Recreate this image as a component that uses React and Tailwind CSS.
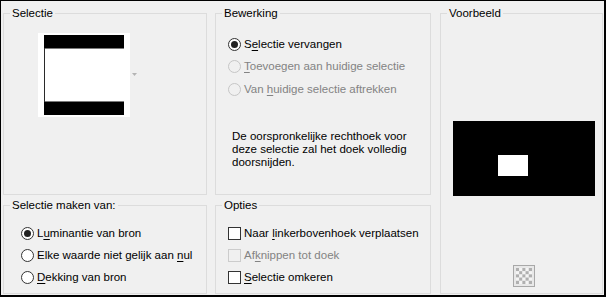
import React from "react";

const GroupBox = ({ title, className = "", children }) => (
  <div className={`relative border border-[#dcdcdc] ${className}`}>
    <span className="absolute -top-[8px] left-[6px] bg-[#f0f0f0] px-[2px] leading-[14px]">
      {title}
    </span>
    {children}
  </div>
);

const Radio = ({ checked, disabled, children }) => (
  <div className={`flex items-center gap-[3px] ${disabled ? "text-[#838383]" : "text-black"}`}>
    <span
      className={`flex h-[13px] w-[13px] items-center justify-center rounded-full border ${
        disabled ? "border-[#c6c6c6] bg-[#f0f0f0]" : "border-[#333333] bg-white"
      }`}
    >
      {checked && <span className="h-[7px] w-[7px] rounded-full bg-[#222222]" />}
    </span>
    <span>{children}</span>
  </div>
);

const Check = ({ disabled, children }) => (
  <div className={`flex items-center gap-[3px] ${disabled ? "text-[#838383]" : "text-black"}`}>
    <span
      className={`h-[13px] w-[13px] border ${
        disabled ? "border-[#cccccc] bg-[#f0f0f0]" : "border-[#333333] bg-white"
      }`}
    />
    <span>{children}</span>
  </div>
);

const U = ({ children }) => <span className="underline underline-offset-[2px]">{children}</span>;

export default function App() {
  return (
    <div
      className="flex h-[297px] w-[606px] border-t border-l border-r-2 border-b-2 border-black bg-[#f0f0f0] pt-[12px] pl-[2px] pr-[1px] pb-[1px] text-[11.5px] leading-[13px] text-black"
      style={{ fontFamily: '"Liberation Sans", Arial, sans-serif' }}
    >
      <div className="grid grid-cols-[204px_216px] grid-rows-[182px_89px] gap-x-[8px] gap-y-[10px]">
        {/* Selectie */}
        <GroupBox title="Selectie">
          <div className="flex items-center pl-[34px] pt-[19px]">
            <div className="flex h-[84px] w-[92px] items-start justify-center bg-white pt-[2px]">
              <svg width="80" height="80" viewBox="0 0 80 80">
                <rect x="0" y="0" width="80" height="80" fill="#ffffff" />
                <rect x="0" y="0" width="80" height="13" fill="#000000" />
                <rect x="0" y="13" width="80" height="1" fill="#7a7a7a" />
                <rect x="0" y="66" width="80" height="1" fill="#7a7a7a" />
                <rect x="0" y="67" width="80" height="13" fill="#000000" />
                <rect x="0" y="13" width="1" height="54" fill="#2a2a2a" />
              </svg>
            </div>
            <svg className="ml-[2px]" width="6" height="4" viewBox="0 0 6 4">
              <path d="M0 0h5l-2.5 3z" fill="#b4b4b4" />
            </svg>
          </div>
        </GroupBox>

        {/* Bewerking */}
        <GroupBox title="Bewerking">
          <div className="flex flex-col pt-[19px] pl-[12px]">
            <div className="flex h-[22px] items-center">
              <Radio checked>
                S<U>e</U>lectie vervangen
              </Radio>
            </div>
            <div className="flex h-[23px] items-center">
              <Radio disabled>
                <U>T</U>oevoegen aan huidige selectie
              </Radio>
            </div>
            <div className="flex h-[22px] items-center">
              <Radio disabled>
                Van <U>h</U>uidige selectie aftrekken
              </Radio>
            </div>
          </div>
          <p className="mt-[30px] pl-[16px] w-[210px]">
            De oorspronkelijke rechthoek voor
            <br />
            deze selectie zal het doek volledig
            <br />
            doorsnijden.
          </p>
        </GroupBox>

        {/* Selectie maken van */}
        <GroupBox title="Selectie maken van:">
          <div className="flex flex-col pt-[16px] pl-[17px]">
            <div className="flex h-[22px] items-center">
              <Radio checked>
                L<U>u</U>minantie van bron
              </Radio>
            </div>
            <div className="flex h-[22px] items-center">
              <Radio>
                Elke waarde niet gelijk aan <U>n</U>ul
              </Radio>
            </div>
            <div className="flex h-[22px] items-center">
              <Radio>
                <U>D</U>ekking van bron
              </Radio>
            </div>
          </div>
        </GroupBox>

        {/* Opties */}
        <GroupBox title="Opties">
          <div className="flex flex-col pt-[16px] pl-[12px]">
            <div className="flex h-[22px] items-center">
              <Check>
                Naar <U>l</U>inkerbovenhoek verplaatsen
              </Check>
            </div>
            <div className="flex h-[22px] items-center">
              <Check disabled>
                Af<U>k</U>nippen tot doek
              </Check>
            </div>
            <div className="flex h-[22px] items-center">
              <Check>
                <U>S</U>electie omkeren
              </Check>
            </div>
          </div>
        </GroupBox>
      </div>

      {/* Voorbeeld */}
      <GroupBox title="Voorbeeld" className="ml-[9px] h-[281px] w-[163px]">
        <div className="flex h-full flex-col pl-[12px] pt-[107px]">
          <div className="h-[75px] w-[142px] bg-black pl-[45px] pt-[34px]">
            <div className="h-[21px] w-[30px] bg-white" />
          </div>
          <div className="mt-[69px] ml-[60px]">
            <svg width="22" height="22" viewBox="0 0 22 22">
              <rect x="0.5" y="0.5" width="21" height="21" fill="#e8e8e8" stroke="#a8a8a8" />
              {[0, 1, 2, 3, 4].map((r) =>
                [0, 1, 2, 3, 4].map((c) => (
                  <rect
                    key={`${r}-${c}`}
                    x={3 + c * 3.2}
                    y={3 + r * 3.2}
                    width="3.2"
                    height="3.2"
                    fill={(r + c) % 2 === 0 ? "#b0b0b0" : "#f4f4f4"}
                  />
                ))
              )}
            </svg>
          </div>
        </div>
      </GroupBox>
    </div>
  );
}
